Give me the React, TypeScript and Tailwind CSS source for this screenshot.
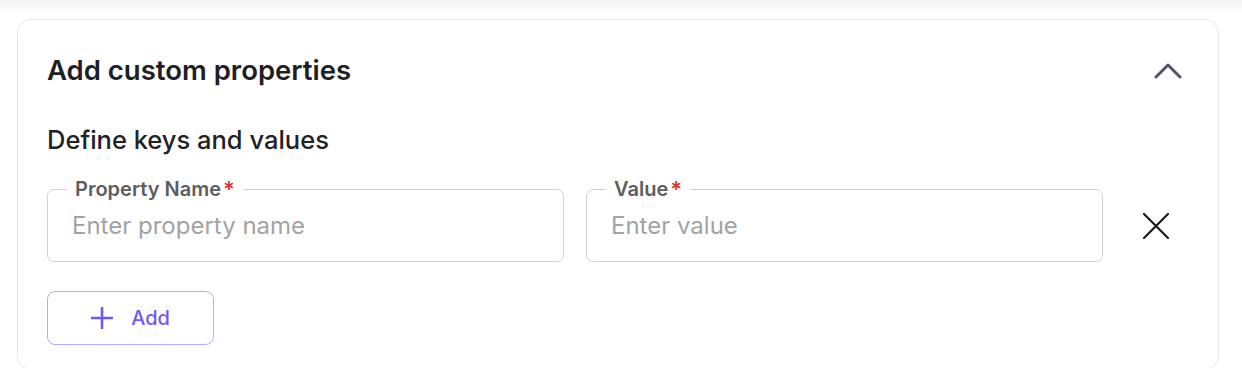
import { useState } from 'react';

type Row = { id: number; name: string; value: string };

function ChevronUp() {
    return (
        <svg width="28" height="16" viewBox="0 0 28 16" fill="none">
            <polyline points="2,14 14,2 26,14" stroke="#54526a" strokeWidth={3} strokeLinecap="round" strokeLinejoin="round" />
        </svg>
    );
}

function Field({ label, placeholder, value, onChange }: { label: string; placeholder: string; value: string; onChange: (v: string) => void }) {
    return (
        <div className="relative w-[517px] h-[73px] border border-[#d2d2d2] rounded-[7px]">
            <div className="absolute -top-[15px] left-[19px] bg-white px-[8px] flex items-start text-[20px] leading-[28px] font-semibold text-[#5e5e5e]">
                {label}
                <span className="text-[#d8352a] text-[22px] ml-[2px]">*</span>
            </div>
            <input
                type="text"
                value={value}
                onChange={(e) => onChange(e.target.value)}
                placeholder={placeholder}
                className="w-full h-full bg-transparent pl-[24px] pr-4 text-[24px] text-[#333] placeholder-[#a3a3a3] outline-none"
            />
        </div>
    );
}

export default function App() {
    const [open, setOpen] = useState(true);
    const [rows, setRows] = useState<Row[]>([{ id: 1, name: '', value: '' }]);

    const update = (id: number, key: 'name' | 'value', v: string) =>
        setRows(rows.map(r => (r.id === id ? { ...r, [key]: v } : r)));

    return (
        <div className="min-h-screen bg-white" style={{ fontFamily: 'Inter, "Noto Sans", sans-serif' }}>
            {/* bottom of the previous card */}
            <div className="h-[12px] bg-gradient-to-b from-[#f4f4f4] to-white" />

            <div className="mt-[7px] ml-[17px] w-[1202px] border border-[#e7e7e7] rounded-[14px] px-[29px] pt-[34px] pb-[24px]">
                <div className="flex items-center justify-between h-[32px]">
                    <h2 className="text-[27.5px] leading-[32px] font-semibold text-[#1e1e24]">Add custom properties</h2>
                    <button onClick={() => setOpen(!open)} className="mr-[7px] mt-[2px]">
                        <ChevronUp />
                    </button>
                </div>

                {open && (
                    <div>
                        <h3 className="mt-[40px] text-[25.5px] leading-[28px] font-medium text-[#222226]">Define keys and values</h3>

                        <div className="mt-[35px] flex flex-col gap-6">
                            {rows.map(row => (
                                <div key={row.id} className="flex items-center">
                                    <Field label="Property Name" placeholder="Enter property name" value={row.name} onChange={(v) => update(row.id, 'name', v)} />
                                    <div className="w-[22px]" />
                                    <Field label="Value" placeholder="Enter value" value={row.value} onChange={(v) => update(row.id, 'value', v)} />
                                    <button onClick={() => setRows(rows.filter(r => r.id !== row.id))} className="ml-[39px]">
                                        <svg width="28" height="28" viewBox="0 0 28 28" fill="none">
                                            <path d="M2 2L26 26M26 2L2 26" stroke="#1a1a1a" strokeWidth={2.2} strokeLinecap="round" />
                                        </svg>
                                    </button>
                                </div>
                            ))}
                        </div>

                        <button
                            onClick={() => setRows([...rows, { id: Date.now(), name: '', value: '' }])}
                            className="mt-[29px] w-[167px] h-[54px] border border-[#b8abfb] rounded-[8px] flex items-center justify-center gap-[18px] text-[#7257f4] text-[20px] font-medium"
                        >
                            <svg width="22" height="22" viewBox="0 0 22 22" fill="none">
                                <path d="M11 1V21M1 11H21" stroke="#7257f4" strokeWidth={2.6} strokeLinecap="round" />
                            </svg>
                            Add
                        </button>
                    </div>
                )}
            </div>
        </div>
    );
}
